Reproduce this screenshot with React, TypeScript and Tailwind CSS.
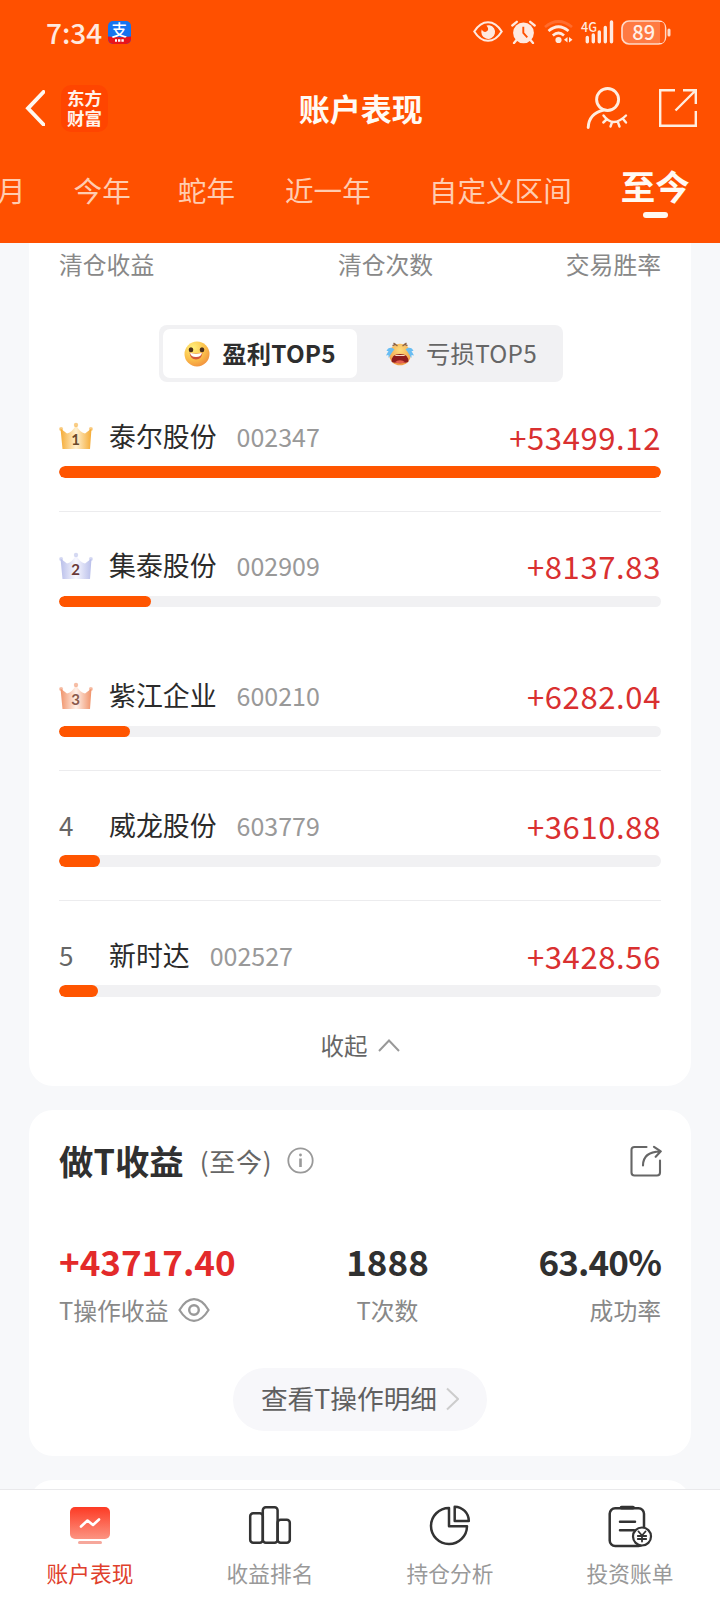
import React, { useState } from 'react';

const periods = [
    { label: '月', className: '-ml-[3px]' },
    { label: '今年', className: 'ml-[48px]' },
    { label: '蛇年', className: 'ml-[47px]' },
    { label: '近一年', className: 'ml-[50px]' },
    { label: '自定义区间', className: 'ml-[58px]' },
];

const stocks = [
    { name: '泰尔股份', code: '002347', profit: 53499.12, divider: true },
    { name: '集泰股份', code: '002909', profit: 8137.83, divider: false },
    { name: '紫江企业', code: '600210', profit: 6282.04, divider: true },
    { name: '威龙股份', code: '603779', profit: 3610.88, divider: true },
    { name: '新时达', code: '002527', profit: 3428.56, divider: false },
];

const crownColors = [
    { edge: '#f5ab35', mid: '#fff0cf', text: '#6b4a2a' },
    { edge: '#b9bfea', mid: '#f8f8ff', text: '#6a3a3a' },
    { edge: '#f0936a', mid: '#fff0e8', text: '#8a5a4c' },
];

const Crown: React.FC<{ rank: number }> = ({ rank }) => {
    const c = crownColors[rank - 1];
    const id = `crown-${rank}`;
    return (
        <svg className="overflow-visible" width="34" height="28" viewBox="0 0 34 28">
            <defs>
                <linearGradient id={id} x1="0" x2="1" y1="0" y2="0">
                    <stop offset="0" stopColor={c.edge} />
                    <stop offset="0.5" stopColor={c.mid} />
                    <stop offset="1" stopColor={c.edge} />
                </linearGradient>
            </defs>
            <path d="M1.5 6.5 L8 11.5 Q13.5 10 17 3 Q20.5 10 26 11.5 L32.5 6.5 L31 27 H3.5 Z" fill={`url(#${id})`} />
            <circle cx="17" cy="3" r="2.2" fill={c.edge} opacity="0.6" />
            <circle cx="2.1" cy="6.9" r="2" fill={c.edge} opacity="0.6" />
            <circle cx="31.9" cy="6.9" r="2" fill={c.edge} opacity="0.6" />
            <text x="16.6" y="23" textAnchor="middle" fontSize="15" fontWeight="700" fill={c.text} fontFamily="Lato, sans-serif">
                {rank}
            </text>
        </svg>
    );
};

const HappyFace = () => (
    <svg width="26" height="26" viewBox="0 0 26 26">
        <defs>
            <radialGradient id="happy" cx="0.35" cy="0.25" r="0.85">
                <stop offset="0" stopColor="#fff07a" />
                <stop offset="0.55" stopColor="#fbc04b" />
                <stop offset="1" stopColor="#f08a3c" />
            </radialGradient>
        </defs>
        <circle cx="13" cy="13" r="12.5" fill="url(#happy)" />
        <ellipse cx="7" cy="8.8" rx="2.3" ry="2.5" fill="#4a2f1c" />
        <ellipse cx="18" cy="8.8" rx="2.3" ry="2.5" fill="#4a2f1c" />
        <path d="M5.5 11.5 Q12 14 18.5 11.5 Q17.5 18.5 12 18.5 Q6.5 18.5 5.5 11.5Z" fill="#d4573a" />
        <path d="M6 11.8 Q12 14 18 11.8 Q17.3 16 12 16 Q6.7 16 6 11.8Z" fill="#fff" />
    </svg>
);

const CryingFace = () => (
    <svg width="30" height="24" viewBox="0 0 30 24">
        <defs>
            <radialGradient id="crying" cx="0.5" cy="0.3" r="0.8">
                <stop offset="0" stopColor="#fddc7c" />
                <stop offset="1" stopColor="#f0913e" />
            </radialGradient>
        </defs>
        <circle cx="15" cy="12.5" r="10.8" fill="url(#crying)" />
        <path d="M9.5 7.5 C7 4.5 2.5 5.5 1.5 9 L3.5 9 L1 13.5 L3.5 13 L3.5 16 C5 14.5 6.5 10 9.5 7.5Z" fill="#69bdf2" />
        <path d="M20.5 7.5 C23 4.5 27.5 5.5 28.5 9 L26.5 9 L29 13.5 L26.5 13 L26.5 16 C25 14.5 23.5 10 20.5 7.5Z" fill="#69bdf2" />
        <path d="M7.5 3.6 L11 2.2 M8.5 1 L12.5 4 M22.5 3.6 L19 2.2 M21.5 1 L17.5 4" stroke="#8a6145" strokeWidth="1.3" fill="none" />
        <path d="M6.7 20 Q6 12 15 12 Q24 12 23.3 20 Q15 22.5 6.7 20Z" fill="#8e1d1d" />
        <path d="M9.5 20.5 Q15 16 20.5 20.5 Q15 22 9.5 20.5Z" fill="#e4604f" />
        <path d="M10 12.9 H20 L19.4 14 H10.6Z" fill="#f5dcc8" />
    </svg>
);

const StatusBar = () => (
    <div className="flex h-16 items-center pl-[46px] pr-[49px] text-[#ffe9df]">
        <span className="w-[56px] text-[28px] leading-[42px] font-medium">7:34</span>
        <svg className="ml-1.5 overflow-visible" width="23" height="23" viewBox="0 0 23 23">
            <defs>
                <clipPath id="pay">
                    <rect width="23" height="23" rx="5" />
                </clipPath>
            </defs>
            <g clipPath="url(#pay)">
                <rect width="23" height="23" fill="#1674ef" />
                <path d="M0 15.5 Q12 17 23 15.5 V23 H0Z" fill="#e8141c" />
            </g>
            <text x="11.3" y="14.6" fontSize="15.5" fontWeight="500" textAnchor="middle" fill="#fff">支</text>
            <path d="M7 19.5 h2 M10 19.5 h2.4 M13.4 19.5 h2.4" stroke="#fff" strokeWidth="2.6" />
        </svg>
        <div className="ml-auto flex items-center">
            <svg width="30" height="22" viewBox="0 0 30 22" fill="none">
                <path d="M1.3 10.5 Q7 1.2 15 1.2 Q23 1.2 28.7 10.5 Q23 19.8 15 19.8 Q7 19.8 1.3 10.5Z" stroke="currentColor" strokeWidth="2.1" />
                <path d="M16.5 4.2 A6.9 6.9 0 1 1 8.7 8.5 Q10 11.5 13 10.8 Q17 9 13.5 4.4 Q15 4 16.5 4.2Z" fill="currentColor" />
            </svg>
            <svg className="ml-2" width="25" height="24" viewBox="0 0 25 24" fill="none">
                <circle cx="12.5" cy="12.8" r="10.4" fill="currentColor" />
                <path d="M1.3 5.5 L5.8 1.8 M23.7 5.5 L19.2 1.8 M5.5 20 L3 23 M19.5 20 L22 23" stroke="currentColor" strokeWidth="2.3" strokeLinecap="round" />
                <path d="M12.3 6.7 V13 L16.3 17.3" stroke="#ff5000" strokeWidth="1.9" />
            </svg>
            <svg className="ml-2" width="29" height="24" viewBox="0 0 29 24" fill="none" strokeWidth="2.7">
                <path d="M1 7 Q14.5 -4 28 7" stroke="#ff875a" opacity="0.5" />
                <path d="M4.5 11 Q14.5 2.5 24.5 11 M8.8 15.5 Q14.5 10.5 20 15.5" stroke="currentColor" />
                <circle cx="14.5" cy="20" r="3.1" fill="currentColor" />
                <path d="M20 19.7 L23.5 17 V22.5Z M28.5 19.7 L25 17 V22.5Z" fill="currentColor" />
            </svg>
            <svg className="ml-2 overflow-visible" width="33" height="24" viewBox="0 0 33 24" fill="none">
                <text x="0" y="11.5" fontSize="13.5" fontWeight="500" textLength="16" lengthAdjust="spacingAndGlyphs" fill="currentColor">4G</text>
                <path d="M6.3 17.5 V21.7 M12.3 15 V21.7 M18.3 12 V21.7 M24.3 7.5 V21.7 M30.5 2 V21.7" stroke="currentColor" strokeWidth="3.4" strokeLinecap="round" />
            </svg>
            <svg className="ml-[7px] overflow-visible" width="50" height="25" viewBox="0 0 50 25">
                <rect x="1" y="1" width="43.5" height="23" rx="7" fill="#ff7a42" stroke="#ffd9c8" strokeWidth="1.7" />
                <path d="M39 2 h2 q2.8 1 2.8 5 v11 q0 4 -2.8 5 h-2z" fill="#ff5a10" />
                <rect x="46.5" y="8.5" width="3" height="8" rx="1.5" fill="#ffd9c8" />
                <text x="22.7" y="19.8" fontSize="20" fontWeight="500" textAnchor="middle" fill="#fff0e8">89</text>
            </svg>
        </div>
    </div>
);

const Header = () => (
    <header className="h-[243px] shrink-0 overflow-hidden bg-[#ff5000]">
        <StatusBar />
        <div className="flex h-[88px] items-center justify-between pl-[25px] pr-[22px]">
            <div className="flex items-center">
                <svg width="20" height="36" viewBox="0 0 20 36" fill="none">
                    <path d="M18.5 2 L3 18.3 L18.5 34.5" stroke="#fff8f0" strokeWidth="3.9" strokeLinecap="round" />
                </svg>
                <div className="ml-4 flex h-[47px] w-[47px] items-center justify-center rounded-[10px] bg-[#ff4500] text-[17.5px] leading-[20px] font-bold text-[#fff3ea]">
                    东方<br />财富
                </div>
            </div>
            <h1 className="-mr-[0.5px] pb-0.5 pl-[27px] text-center text-[31px] leading-none font-bold whitespace-nowrap text-[#fffaf4]">账户表现</h1>
            <div className="flex items-center justify-end">
                <svg width="42" height="42" viewBox="0 0 42 42" fill="none" stroke="#ffeddf" strokeWidth="2.9" strokeLinecap="round">
                    <circle cx="21.6" cy="12.5" r="11" />
                    <path d="M2.2 40.5 Q3 26.5 17.5 23.2" />
                    <path d="M17.5 28.5 Q27 41.5 40 28.5 M20.5 32.5 L17.3 35.5 M26 35.3 L24.5 39.5 M32 35.3 L33.5 39.5 M37.3 32.3 L40 35.5" strokeWidth="2.4" />
                </svg>
                <svg className="ml-[30px]" width="40" height="40" viewBox="0 0 40 40" fill="none" stroke="#ffeddf" strokeWidth="2.4">
                    <path d="M17 2.2 H2.2 V37.8 H37.8 V23" />
                    <path d="M25 2.2 H37.8 V16 M37 3 L17.5 22.5" />
                </svg>
            </div>
        </div>
        <nav className="flex h-[76px] items-center text-[28.6px] leading-none whitespace-nowrap text-[#ffccb0]">
            {periods.map((p) => (
                <span key={p.label} className={p.className}>{p.label}</span>
            ))}
            <div className="ml-[49px] flex flex-col items-center pt-1.5">
                <span className="text-[34.5px] font-bold text-[#fffaf4]">至今</span>
                <span className="mt-2.5 h-1.5 w-[25px] rounded-full bg-[#fff8f0]" />
            </div>
        </nav>
    </header>
);

const StockRow: React.FC<{ rank: number; stock: (typeof stocks)[number] }> = ({ rank, stock }) => (
    <li className={`h-[129.75px] border-b pt-[33px] ${stock.divider ? 'border-[#ececee]' : 'border-transparent'}`}>
        <div className="flex h-[42px] items-center leading-none">
            <div className="w-[50px] text-[26px] text-[#666]">{rank <= 3 ? <Crown rank={rank} /> : rank}</div>
            <span className="text-[26.9px] text-[#2b2b2b]">{stock.name}</span>
            <span className="ml-5 text-[25px] text-[#999]">{stock.code}</span>
            <span className="ml-auto text-[31px] tracking-[0.02em] text-[#d93030]">+{stock.profit.toFixed(2)}</span>
        </div>
        <div className="mt-[9px] h-[11.5px] overflow-hidden rounded-full bg-[#f1f1f3]">
            <div
                className="h-full rounded-full bg-[#ff5500]"
                style={{ width: `${(stock.profit / stocks[0].profit) * 100}%` }}
            />
        </div>
    </li>
);

const ClearanceCard = () => {
    const [tab, setTab] = useState<'win' | 'loss'>('win');
    const on = 'bg-white font-bold text-[#2e2e2e]';
    const off = 'text-[#666]';
    return (
        <section className="h-[843px] shrink-0 rounded-b-[24px] bg-white px-[30px]">
            <div className="flex h-[82px] justify-between pt-[9px] text-[23.8px] leading-none text-[#888]">
                <span>清仓收益</span>
                <span className="pl-[51px]">清仓次数</span>
                <span>交易胜率</span>
            </div>
            <div className="ml-[100px] flex h-[57px] w-[404px] rounded-lg bg-[#f1f1f3] p-1 leading-none">
                <button
                    className={`flex w-[194px] items-center justify-center gap-3 rounded-[7px] text-[24.3px] tracking-[0.01em] ${tab === 'win' ? on : off}`}
                    onClick={() => setTab('win')}
                >
                    <HappyFace />
                    盈利TOP5
                </button>
                <button
                    className={`flex flex-1 items-center justify-center gap-[11px] rounded-[7px] pl-1.5 text-[24.3px] tracking-[0.01em] ${tab === 'loss' ? on : off}`}
                    onClick={() => setTab('loss')}
                >
                    <CryingFace />
                    亏损TOP5
                </button>
            </div>
            <ul>
                {stocks.map((s, i) => (
                    <StockRow key={s.code} rank={i + 1} stock={s} />
                ))}
            </ul>
            <button className="mx-auto mt-[3px] flex items-center gap-2.5 text-[23.5px] leading-none text-[#666]">
                收起
                <svg width="22" height="13" viewBox="0 0 22 13" fill="none">
                    <path d="M1 12 L11 1.5 L21 12" stroke="#999" strokeWidth="2" />
                </svg>
            </button>
        </section>
    );
};

const TradeCard = () => (
    <section className="mt-6 h-[346px] shrink-0 rounded-[24px] bg-white px-[30px] leading-none">
        <div className="flex h-[101px] items-center">
            <h2 className="text-[34.4px] font-bold text-[#303030]">做T收益</h2>
            <span className="ml-4 text-[26px] tracking-[0.03em] text-[#666]">(至今)</span>
            <svg className="ml-[15px]" width="27" height="27" viewBox="0 0 27 27" fill="none">
                <circle cx="13.5" cy="13.5" r="12.2" stroke="#999" strokeWidth="1.8" />
                <path d="M13.5 11.5 V20" stroke="#999" strokeWidth="2.6" />
                <circle cx="13.5" cy="8" r="1.4" fill="#999" />
            </svg>
            <svg className="-mr-px ml-auto" width="32" height="32" viewBox="0 0 32 32" fill="none" stroke="#666" strokeWidth="2.1" strokeLinecap="round" strokeLinejoin="round">
                <path d="M16.5 2 H4.5 Q1.5 2 1.5 5 V27.5 Q1.5 30.5 4.5 30.5 H27 Q30 30.5 30 27.5 V15.5" />
                <path d="M13 20.5 Q13 7 30.3 6.4 M24 1.8 L30.8 6.3 L25.7 11.8" />
            </svg>
        </div>
        <div className="flex justify-between pt-8">
            <div className="w-[180px]">
                <div className="text-[35px] font-bold text-[#e32a2a]">+43717.40</div>
                <div className="mt-5 flex items-center gap-2.5 text-[23.8px] whitespace-nowrap text-[#888]">
                    T操作收益
                    <svg width="32" height="24" viewBox="0 0 32 24" fill="none" stroke="#999" strokeWidth="2.2">
                        <path d="M1.5 12 Q8 1.2 16 1.2 Q24 1.2 30.5 12 Q24 22.8 16 22.8 Q8 22.8 1.5 12Z" />
                        <circle cx="16" cy="12" r="4.8" strokeWidth="2.4" />
                    </svg>
                </div>
            </div>
            <div className="text-center">
                <div className="text-[35px] font-bold text-[#303030]">1888</div>
                <div className="mt-5 text-[23.8px] text-[#888]">T次数</div>
            </div>
            <div className="w-[125px] text-right">
                <div className="text-[35px] font-bold tracking-[-0.025em] text-[#303030]">63.40%</div>
                <div className="mt-5 text-[23.8px] text-[#888]">成功率</div>
            </div>
        </div>
        <button className="mx-auto mt-[46px] flex h-[63px] w-[254px] items-center justify-center gap-[9px] rounded-full bg-[#f7f7fa] pb-0.5 text-[26.7px] text-[#606060]">
            查看T操作明细
            <svg width="13" height="24" viewBox="0 0 13 24" fill="none">
                <path d="M1 1.5 L12 12 L1 22.5" stroke="#ccc" strokeWidth="2" />
            </svg>
        </button>
    </section>
);

const ChartIcon = () => (
    <svg width="44" height="44" viewBox="0 0 44 44" fill="none">
        <defs>
            <linearGradient id="chart" x1="0" x2="0" y1="0" y2="1">
                <stop offset="0" stopColor="#fd3a24" />
                <stop offset="1" stopColor="#fc9482" />
            </linearGradient>
        </defs>
        <rect x="2" y="3" width="40" height="32" rx="5" fill="url(#chart)" />
        <path d="M13 22.5 L19.5 16.5 L25 21 L31 15.5" stroke="#fff" strokeWidth="2.6" strokeLinecap="round" strokeLinejoin="round" />
        <rect x="10" y="37" width="24" height="3" rx="1.5" fill="#f6a79b" />
    </svg>
);

const RankIcon = () => (
    <svg width="44" height="44" viewBox="0 0 44 44" fill="none" stroke="#333" strokeWidth="2.5">
        <rect x="2.2" y="9.3" width="12.6" height="29.5" rx="3" />
        <rect x="14.8" y="3.2" width="14.8" height="35.6" rx="3" />
        <rect x="29.6" y="15.8" width="12.2" height="23" rx="3" />
    </svg>
);

const PieIcon = () => (
    <svg width="44" height="44" viewBox="0 0 44 44" fill="none" stroke="#333" strokeWidth="2.5" strokeLinejoin="round">
        <path d="M21 4 A18 18 0 1 0 39 22.2 H21 Z" />
        <path d="M26.7 2.7 A14.3 14.3 0 0 1 40.8 17 H26.7 Z" />
    </svg>
);

const BillIcon = () => (
    <svg width="46" height="44" viewBox="0 0 46 44" fill="none" stroke="#333" strokeWidth="2.5" strokeLinecap="round">
        <rect x="2.7" y="4.2" width="34.3" height="37.8" rx="5.5" />
        <path d="M14.5 3.6 H26" strokeWidth="3.8" />
        <path d="M13 17.7 H28 M13 26.2 H27" />
        <circle cx="35" cy="32.5" r="9" fill="#fff" strokeWidth="2.2" />
        <path d="M31.5 27.5 L35 31.5 L38.5 27.5 M35 31.5 V37.5 M30.8 32 H39.2 M30.8 35 H39.2" strokeWidth="1.8" />
    </svg>
);

const navItems = [
    { label: '账户表现', icon: <ChartIcon />, active: true },
    { label: '收益排名', icon: <RankIcon />, active: false },
    { label: '持仓分析', icon: <PieIcon />, active: false },
    { label: '投资账单', icon: <BillIcon />, active: false },
];

const BottomNav = () => (
    <nav className="grid h-[111px] shrink-0 grid-cols-4 border-t border-[#e9e9eb] bg-white">
        {navItems.map((item) => (
            <a key={item.label} className="flex flex-col items-center pt-3.5">
                {item.icon}
                <span className={`mt-3.5 text-[21.7px] leading-none ${item.active ? 'text-[#e0402c]' : 'text-[#999]'}`}>
                    {item.label}
                </span>
            </a>
        ))}
    </nav>
);

export default function App() {
    return (
        <div className="flex h-[1600px] w-[720px] flex-col overflow-hidden bg-[#f7f8fa] font-['Noto_Sans_CJK_SC',sans-serif]">
            <Header />
            <main className="flex min-h-0 flex-1 flex-col overflow-hidden px-[29px]">
                <ClearanceCard />
                <TradeCard />
                <section className="mt-6 h-20 shrink-0 rounded-t-[24px] bg-white" />
            </main>
            <BottomNav />
        </div>
    );
}
